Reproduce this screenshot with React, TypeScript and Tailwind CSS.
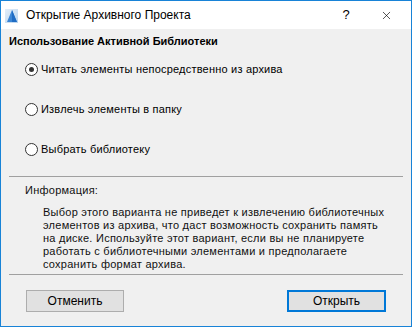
import { X } from 'lucide-react'

const options = [
  { label: 'Читать элементы непосредственно из архива', checked: true },
  { label: 'Извлечь элементы в папку', checked: false },
  { label: 'Выбрать библиотеку', checked: false },
]

const infoLines = [
  'Выбор этого варианта не приведет к извлечению библиотечных',
  'элементов из архива, что даст возможность сохранить память',
  'на диске. Используйте этот вариант, если вы не планируете',
  'работать с библиотечными элементами и предполагаете',
  'сохранить формат архива.',
]

function AppIcon() {
  return (
    <svg width="13" height="14" viewBox="0 0 13 14">
      <defs>
        <linearGradient id="bg" x1="0" y1="0" x2="1" y2="1">
          <stop offset="0" stopColor="#e3eef9" />
          <stop offset="1" stopColor="#b9d4ee" />
        </linearGradient>
      </defs>
      <rect x="0" y="0" width="13" height="14" fill="url(#bg)" />
      <path d="M7 1 L2 13 L12 13 Z" fill="#3b86d6" />
      <path d="M7 1 L7 13 L12 13 Z" fill="#1f6cc4" />
    </svg>
  )
}

function Radio({ checked }: { checked: boolean }) {
  return (
    <span className="w-[13px] h-[13px] rounded-full border border-[#333333] bg-white flex items-center justify-center shrink-0">
      {checked && <span className="w-[5px] h-[5px] rounded-full bg-[#333333]" />}
    </span>
  )
}

export default function App() {
  return (
    <div className="w-[412px] h-[327px] border border-[#1883d7] bg-[#f0f0f0] flex flex-col text-black font-['Liberation_Sans',sans-serif]">
      <div className="h-[28px] bg-white flex items-center shrink-0">
        <span className="ml-[4px] mt-[2px]">
          <AppIcon />
        </span>
        <span className="ml-[8px] text-[12px]">Открытие Архивного Проекта</span>
        <span className="ml-auto w-[40px] text-center text-[13px]">?</span>
        <span className="w-[40px] mr-[5px] flex justify-center">
          <X className="w-[13px] h-[13px]" strokeWidth={1.2} />
        </span>
      </div>

      <div className="flex flex-col px-[8px] text-[11px] tracking-[0.25px]">
        <p className="pt-[4px] h-[20px] leading-[16px] font-bold tracking-normal">
          Использование Активной Библиотеки
        </p>

        <div className="flex flex-col gap-[24px] mt-[12px] pl-[16px]">
          {options.map((o) => (
            <label key={o.label} className="h-[16px] flex items-center gap-[3px] tracking-[0.2px]">
              <Radio checked={o.checked} />
              <span>{o.label}</span>
            </label>
          ))}
        </div>

        <div className="h-px bg-[#a0a0a0] mt-[19px]" />

        <p className="mt-[7px] ml-[16px] leading-[13px] text-[#111111]">Информация:</p>
        <div className="mt-[9px] ml-[34px] leading-[13px] text-[#111111]">
          {infoLines.map((l) => (
            <p key={l}>{l}</p>
          ))}
        </div>

        <div className="h-px bg-[#a0a0a0] mt-[3px]" />

        <div className="flex justify-between mt-[15px] px-[17px] tracking-normal">
          <button className="w-[98px] h-[22px] border border-[#adadad] bg-[#e1e1e1] text-[12px]">
            Отменить
          </button>
          <button className="w-[99px] h-[22px] border-2 border-[#0078d7] bg-[#e1e1e1] text-[12px]">
            Открыть
          </button>
        </div>
      </div>
    </div>
  )
}
